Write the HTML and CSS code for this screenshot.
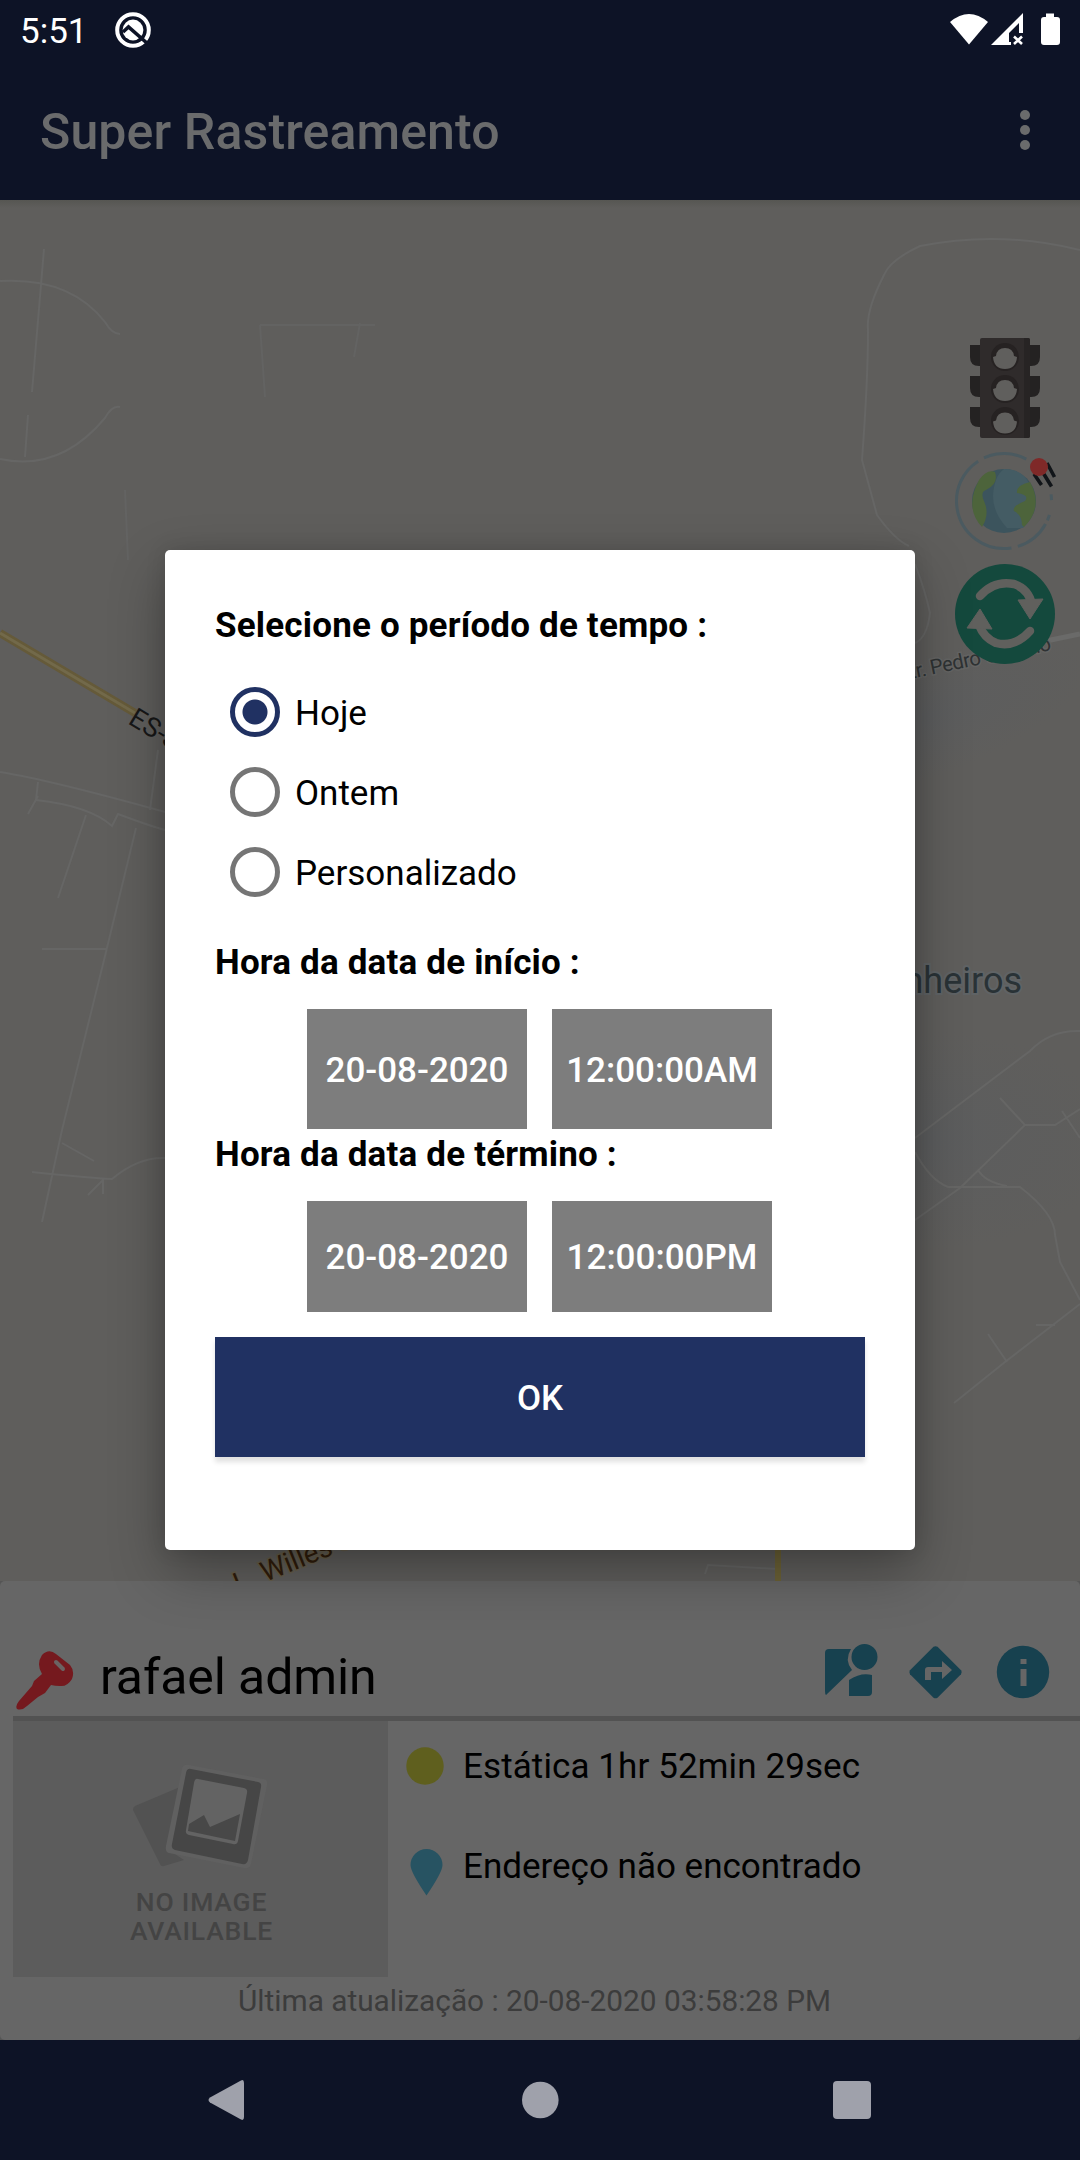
FILE: index.html
```html
<!DOCTYPE html>
<html lang="pt-BR">
<head>
<meta charset="utf-8">
<title>Super Rastreamento</title>
<link rel="stylesheet" href="styles.css">
</head>
<body>
<div class="screen">
  <header class="header">
    <div class="status">
      <span class="clock">5:51</span>
      <svg class="status-q" width="38" height="38" viewBox="0 0 38 38">
        <circle cx="19" cy="19" r="15.800" fill="none" stroke="#fff" stroke-width="4"/>
        <circle cx="19" cy="19" r="10.400" fill="#fff"/>
        <path d="M9 21l5.500-5L34 33" fill="none" stroke="#0d1326" stroke-width="3.600"/>
      </svg>
      <svg class="status-icons" width="112" height="34" viewBox="0 0 112 34">
        <path d="M1 9Q20-7 39 9L20 31.500Z" fill="#fff"/>
        <path d="M42 32L74 0V20H70V10L60 20V29H62V32Z" fill="#fff"/>
        <path d="M65 23.500l8 7.500M73 23.500l-8 7.500" stroke="#fff" stroke-width="2.600"/>
        <path d="M97 .500h8V4h3q3 0 3 3v22q0 3-3 3H95q-3 0-3-3V7q0-3 3-3h2z" fill="#fff"/>
      </svg>
    </div>
    <div class="toolbar">
      <h1 class="app-title">Super Rastreamento</h1>
      <svg width="10" height="40" viewBox="0 0 10 40" fill="#6a6b6c">
        <circle cx="5" cy="5" r="5"/><circle cx="5" cy="20" r="5"/><circle cx="5" cy="35" r="5"/>
      </svg>
    </div>
  </header>

  <main class="map">
    <svg class="map-canvas" width="1080" height="1381" viewBox="0 200 1080 1381">
      <defs>
        <linearGradient id="top" x1="0" y1="0" x2="0" y2="1"><stop offset="0" stop-color="#565652"/><stop offset="1" stop-color="#5f5e5c"/></linearGradient>
        <radialGradient id="urban"><stop offset="0" stop-color="#5c5d5e"/><stop offset="1" stop-color="#5c5d5e" stop-opacity="0"/></radialGradient>
      </defs>
      <rect y="200" width="1080" height="1381" fill="#5f5e5c"/>
      <rect y="200" width="1080" height="8" fill="url(#top)"/>
      <ellipse cx="920" cy="720" rx="180" ry="60" fill="url(#urban)" transform="rotate(-20 920 720)"/>
      <ellipse cx="930" cy="1140" rx="190" ry="110" fill="url(#urban)"/>
      <g fill="none" stroke="#666665" stroke-width="2">
        <path d="M0 281Q70 277 105 322Q112 334 120 334M0 459Q60 472 105 418Q112 405 120 407M44 249L32 392M28 415L25 457"/>
        <path d="M260 325L265 397M260 325H375M360 323L354 357M125 490L128 560" stroke="#636362"/>
        <path d="M0 772Q50 780 165 812M38 782L36 800Q90 806 112 826L118 814Q150 826 165 830M28 814L38 796M86 815L58 898M158 750L150 810M136 828L106 952L62 1130L42 1222M42 949H106M32 1172Q90 1178 112 1179Q138 1157 165 1158M62 1143L94 1161M88 1195L103 1180V1194"/>
        <path d="M1080 250Q1000 230 920 246Q890 260 884 275Q866 310 868 330Q868 380 862 460L877 515Q895 540 909 546M915 564Q925 590 930 613Q927 638 915 643"/>
        <path d="M915 1138L1030 1051Q1050 1030 1080 1031M915 1152Q930 1180 948 1187H1020Q1055 1214 1055 1235L1060 1262L1080 1300M915 1220L960 1188L1025 1125L1000 1098M1025 1125H1055L1080 1109M978 1170Q985 1182 1007 1186M954 1403L1005 1362L1080 1304M988 1334L1007 1362M1036 1325H1055M1062 1111L1080 1138"/>
        <path d="M705 1574L708 1565L778 1569"/>
      </g>
      <path d="M1046 641L1080 634" fill="none" stroke="#6a6a69" stroke-width="5"/>
      <path d="M0 633L135 713" stroke="#655a39" stroke-width="8"/>
      <path d="M0 633L135 713" stroke="#72694a" stroke-width="3"/>
      <path d="M778 1545V1581" stroke="#6c6236" stroke-width="6"/>
      <g class="map-labels">
        <text x="127" y="723" font-size="27" fill="#171717" transform="rotate(31 127 723)">ES-313</text>
        <text x="1052" y="650" font-size="20.500" textLength="165" text-anchor="end" fill="#2e3233" stroke="#646463" stroke-width="3" paint-order="stroke" transform="rotate(-11.500 1052 650)">Estr. Pedro Canário</text>
        <text x="1022" y="993" font-size="36" text-anchor="end" fill="#293236" stroke="#5f6365" stroke-width="4" paint-order="stroke">Pinheiros</text>
        <text x="238" y="1593" font-size="28" fill="#2f1c0b" stroke="#665e4c" stroke-width="3" paint-order="stroke" transform="rotate(-22 238 1593)">L. Willes Jr</text>
      </g>
      <g class="traffic">
        <path d="M970 345h70v12q0 9-9 9h-52q-9 0-9-9zM970 376h70v12q0 9-9 9h-52q-9 0-9-9zM970 407h70v11q0 9-9 9h-52q-9 0-9-9z" fill="#242222"/>
        <rect x="980" y="338" width="50" height="100" rx="2" fill="#2f2b2b"/>
        <path d="M1024 338h4q2 0 2 2v96q0 2-2 2h-4z" fill="#272424"/>
        <g fill="#262222"><circle cx="1005" cy="357" r="14"/><circle cx="1005" cy="389" r="14"/><circle cx="1005" cy="421" r="14"/></g>
        <g fill="#605f5d"><path id="lamp" d="M993 357l3-1q1-8 9-8t9 8l3 1q-1 12-12 12t-12-12z"/><use href="#lamp" y="32"/><use href="#lamp" y="64.500"/></g>
      </g>
      <g class="globe">
        <circle cx="1004" cy="501" r="32" fill="#3c545d"/>
        <path d="M1004 469q18 0 25 14l6 18q-2 18-12 27h-16q-14-15-14-32 1-20 11-27" fill="#445c64"/>
        <path d="M979 480q8-11 16-8 4 12-9 18-6 2-2 11 6 13-2 26-18-19-3-47zM1030 482q-14 3-13 11 13 2 8 8-13 5-11 10 8 4 8 14l2 2q20-20 6-45z" fill="#4d643b"/>
        <circle cx="1004" cy="501" r="47.500" pathLength="360" fill="none" stroke="#4b5a60" stroke-width="3" stroke-dasharray="156 8 53 54 7 18 7 5 44 8" transform="rotate(81 1004 501)"/>
        <path d="M1034 474l7.500 11M1042 471l9.500 15.500M1047 463l7.500 14" stroke="#111519" stroke-width="3.600"/>
        <circle cx="1039" cy="467" r="9" fill="#7f2928"/>
      </g>
      <g class="refresh">
        <circle cx="1005" cy="614" r="50" fill="#14493d"/>
        <g fill="none" stroke="#60605d" stroke-width="8.500" stroke-linecap="round"><path d="M980 596Q994 580 1014 584Q1029 589 1032 605M1030 631Q1015 648 996 643Q984 638 979 625"/></g>
        <path d="M1018 600l25-1-13 20zM980 609l-13 19 25 1z" fill="#60605d" stroke="#60605d" stroke-linejoin="round"/>
      </g>
    </svg>
  </main>

  <section class="card">
    <div class="card-head">
      <svg class="key" width="60" height="60" viewBox="0 0 60 60">
        <path d="M27 4Q34-3 41 3L55 14Q60 20 57 28Q52 36 45 35Q40 35 36 34L30 42L23 46L12 55Q7 60 2 58Q0 55 4 50L17 35L19 30L27 23Q21 13 27 4Z" fill="#75191e"/>
        <path d="M41 11L48 18" stroke="#6b6363" stroke-width="4" stroke-linecap="round"/>
      </svg>
      <span class="device">rafael admin</span>
      <svg class="actions" width="230" height="58" viewBox="0 0 230 58" fill="#17414f">
        <path d="M4 6H26Q19 17 27 27L1 52Q0 51 0 48V10Q0 6 4 6zM24 37Q36 29 47 32V49Q47 53 43 53H24zM52.500 14a13 13 0 1 1-26 0a13 13 0 1 1 26 0z"/>
        <path d="M108.500 3.800Q110.500 2.500 112.500 3.800L136 27.300Q137.500 29.300 136 31.300L112.500 54.700Q110.500 56 108.500 54.700L85 31.300Q83.500 29.300 85 27.300z"/>
        <path d="M100 37V27q0-3 3-3h14v-6l10 9-10 9v-7h-11v8z" fill="#666"/>
        <circle cx="198" cy="29" r="26.200"/>
        <path d="M195.500 16h6v5h-6zM195.500 26h6v17h-6z" fill="#666"/>
      </svg>
    </div>
    <div class="card-body">
      <div class="photo">
        <svg width="140" height="108" viewBox="0 0 140 108">
          <path d="M3 42L48 23L40 88L52 96L32 102Q29 103 28 100L1 46Q1 43 3 42z" fill="#525252"/>
          <path d="M57 1L132 15Q136 16 135 21L119 100Q118 105 112 104L37 89Q33 88 34 82L50 5Q51 0 57 1z" fill="#606060"/>
          <path d="M59 5L126 18Q130 19 129 23L116 96Q115 101 110 100L43 86Q39 85 40 80L54 9Q55 4 59 5z" fill="#464646"/>
          <path d="M66 15L112 24Q116 25 115 29L106 77Q105 81 101 80L57 71Q53 70 54 66L62 19Q63 14 66 15z" fill="#636363"/>
          <path d="M57 60L72 51L78 63L108 50L103 77L56 67z" fill="#484848"/>
        </svg>
        <div class="photo-text">NO IMAGE<br>AVAILABLE</div>
      </div>
      <div class="details">
        <div class="detail"><svg width="40" height="48" viewBox="0 0 40 48"><circle cx="19" cy="24" r="18.700" fill="#5f5f1e"/></svg><span class="duration">Estática 1hr 52min 29sec</span></div>
        <div class="detail"><svg class="pin" width="40" height="48" viewBox="0 0 40 48"><path d="M20.500 1a16 16 0 0 1 16 16Q36.500 24 20.500 47.500Q4.500 24 4.500 17a16 16 0 0 1 16-16z" fill="#275362"/></svg><span>Endereço não encontrado</span></div>
      </div>
    </div>
    <p class="updated">Última atualização : 20-08-2020 03:58:28 PM</p>
  </section>

  <nav class="navbar">
    <svg width="40" height="40" viewBox="0 0 40 40" fill="#9fa1ab"><path d="M34 .500Q37-1 37 3V37Q37 41 34 39.500L3 22.500Q0 20 3 17.500z"/></svg>
    <svg width="40" height="40" viewBox="0 0 40 40" fill="#9fa1ab"><circle cx="20.300" cy="20" r="18.300"/></svg>
    <svg width="40" height="40" viewBox="0 0 40 40" fill="#9fa1ab"><rect x="1" y="1" width="38" height="38" rx="4"/></svg>
  </nav>

  <div class="dialog" role="dialog">
    <h2 class="label">Selecione o período de tempo :</h2>
    <div class="options">
      <div class="option"><span class="radio radio-on"></span><span class="option-text">Hoje</span></div>
      <div class="option"><span class="radio"></span><span class="option-text">Ontem</span></div>
      <div class="option"><span class="radio"></span><span class="option-text">Personalizado</span></div>
    </div>
    <h2 class="label">Hora da data de início :</h2>
    <div class="pickers">
      <button class="picker">20-08-2020</button>
      <button class="picker">12:00:00AM</button>
    </div>
    <h2 class="label">Hora da data de término :</h2>
    <div class="pickers pickers-end">
      <button class="picker">20-08-2020</button>
      <button class="picker">12:00:00PM</button>
    </div>
    <button class="ok">OK</button>
  </div>
</div>
</body>
</html>
```
FILE: styles.css
```css
* { box-sizing: border-box; }
body { margin: 0; font-family: Roboto, sans-serif; font-size: 35px; color: #000; }
svg { display: block; flex: none; }
h1, h2, p { margin: 0; }
button { border: 0; padding: 2px 0 0; font: 500 35px Roboto, sans-serif; color: #fff; }

.screen { position: relative; width: 1080px; height: 2160px; display: flex; flex-direction: column; overflow: hidden; background: #555; }

.header { height: 200px; background: #0d1326; }
.status { height: 60px; padding: 0 19px 0 20px; display: flex; align-items: center; color: #fff; }
.clock { width: 94px; line-height: 41px; padding-top: 2px; }
.status-icons { margin-left: auto; margin-top: -1px; }
.toolbar { height: 140px; padding: 0 50px 0 40px; display: flex; align-items: center; justify-content: space-between; }
.app-title { font-size: 50px; font-weight: 500; line-height: 60px; letter-spacing: .13px; padding-top: 4px; color: #6a6b6c; }

.map { height: 1381px; }
.map-labels { font-family: Roboto, sans-serif; }

.card { height: 459px; background: #666; border-radius: 5px; }
.card-head { height: 140px; margin-left: 13px; padding: 56px 0 0 2px; display: flex; border-bottom: 5px solid #525252; }
.key { margin-top: 14px; }
.device { font-size: 50px; line-height: 60px; letter-spacing: -.1px; margin: 10px 0 0 25px; }
.actions { margin: 6px 25px 0 auto; }
.card-body { display: flex; height: 256px; margin-left: 13px; }
.photo { width: 375px; background: #5c5c5c; display: flex; flex-direction: column; align-items: center; padding: 43px 0 0 8px; }
.photo svg { margin-right: 6px; }
.photo-text { margin-top: 15px; font: 500 26.5px/29px Roboto, sans-serif; letter-spacing: .8px; color: #444; text-align: center; padding-right: 6px; }
.details { padding: 21px 0 0 18px; display: flex; flex-direction: column; gap: 52px; }
.detail { display: flex; gap: 17px; height: 48px; line-height: 48px; }
.detail span { margin-top: 1px; }
.duration { letter-spacing: .1px; }
.pin { margin-top: 6px; }
.updated { height: 62px; line-height: 48px; font-size: 29.8px; text-align: center; color: #3c3c3c; padding-right: 11px; }

.navbar { height: 120px; padding: 0 208px 0 207px; background: #0d1326; display: flex; align-items: center; justify-content: space-between; }

.dialog {
  position: absolute; left: 165px; top: 550px; width: 750px; height: 1000px;
  padding: 51px 50px 0; background: #fff; border-radius: 5px;
  box-shadow: 0 22px 55px rgba(0, 0, 0, .3), 0 0 20px rgba(0, 0, 0, .12);
}
.label { font-size: 35px; font-weight: 700; line-height: 50px; letter-spacing: .18px; }
.options { padding: 21px 0 26px 15px; }
.option { height: 80px; display: flex; align-items: center; gap: 15px; }
.option-text { padding-top: 2px; }
.radio { width: 50px; height: 50px; border: 5px solid #757575; border-radius: 50%; }
.radio-on { border-color: #203162; background: radial-gradient(circle, #203162 12px, #fff 13px); }
.pickers { display: flex; justify-content: center; gap: 25px; height: 120px; margin-top: 21px; padding-right: 1px; margin-bottom: 1px; }
.picker { width: 220px; background: #7d7d7d; }
.pickers-end { height: 111px; margin-bottom: 0; }
.ok { display: block; width: 650px; height: 120px; margin-top: 25px; background: #203162; box-shadow: 0 5px 5px rgba(0, 0, 0, .12); }
```
